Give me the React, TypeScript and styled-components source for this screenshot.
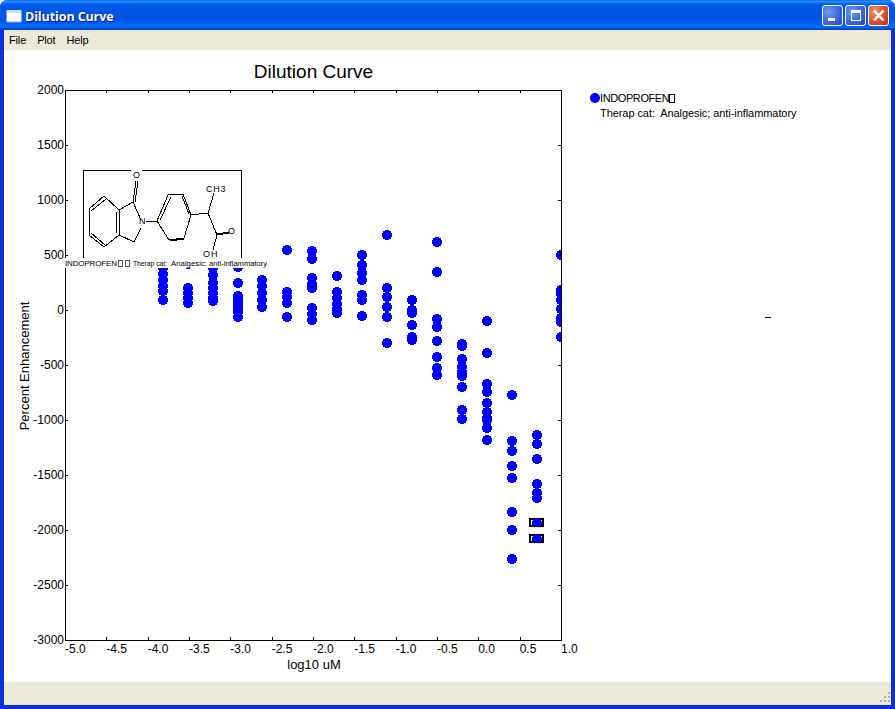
import React from "react";
import styled, { createGlobalStyle } from "styled-components";

const Global = createGlobalStyle`
  html, body { margin: 0; padding: 0; background: #fff; }
  #root { width: 895px; height: 709px; overflow: hidden; }
`;

const Frame = styled.div`
  width: 895px;
  height: 709px;
  box-sizing: border-box;
  display: flex;
  flex-direction: column;
  background: #0831d9;
  border-radius: 7px 7px 0 0;
  overflow: hidden;
  font-family: "Liberation Sans", Arial, sans-serif;
`;

const TitleBar = styled.div`
  height: 30px;
  flex: none;
  box-sizing: border-box;
  padding: 2px 6px 0;
  display: flex;
  align-items: center;
  background: linear-gradient(180deg, #0058ee 0%, #3593ff 4%, #288eff 6%, #127dff 8%, #036ffc 10%, #0262ee 14%, #0057e5 20%, #0054e3 56%, #0055eb 66%, #005bf5 76%, #026afe 86%, #0062ef 92%, #0052d6 94%, #0040ab 100%);
`;

const TitleIcon = styled.svg`
  width: 16px;
  height: 16px;
  flex: none;
  margin-right: 3px;
`;

const TitleText = styled.div`
  flex: 1;
  color: #fff;
  font: bold 12.5px "Open Sans", "DejaVu Sans", sans-serif;
  letter-spacing: -0.1px;
  padding-top: 1px;
  text-shadow: 1px 1px 1px #0f1089;
`;

const Buttons = styled.div`
  display: flex;
  gap: 2px;
  margin-top: -1px;
`;

const CaptionButton = styled.div<{ $close?: boolean }>`
  width: 21px;
  height: 21px;
  box-sizing: border-box;
  border: 1px solid #fff;
  border-radius: 3px;
  display: flex;
  align-items: center;
  justify-content: center;
  background: ${(p) =>
    p.$close
      ? "radial-gradient(circle at 30% 30%, #ee9a80 0%, #d9582f 50%, #b8300f 100%)"
      : "radial-gradient(circle at 30% 30%, #6f97f0 0%, #3c6ae2 55%, #1d45c8 100%)"};
`;

const CaptionGlyph = styled.svg`
  width: 15px;
  height: 15px;
  display: block;
`;

const Body = styled.div`
  flex: 1;
  min-height: 0;
  display: flex;
  flex-direction: column;
  margin: 0 4px 4px;
  background: #fff;
`;

const MenuBar = styled.div`
  height: 20px;
  flex: none;
  display: flex;
  align-items: center;
  gap: 11px;
  padding-left: 5px;
  padding-bottom: 1px;
  box-sizing: border-box;
  background: #ece9d8;
`;

const MenuItem = styled.span`
  font: 11px "Liberation Sans", Arial, sans-serif;
  letter-spacing: -0.15px;
  color: #000;
`;

const Client = styled.div`
  flex: 1;
  min-height: 0;
  display: flex;
  position: relative;
`;

const ChartSvg = styled.svg`
  width: 583px;
  height: 632px;
  flex: none;
  display: block;
`;

const Legend = styled.div`
  flex: 1;
  padding: 41px 0 0 13px;
  font: 11px/15px "Liberation Sans", Arial, sans-serif;
  color: #000;
`;

const LegendRow = styled.div<{ $tracking: number }>`
  position: relative;
  white-space: pre;
  letter-spacing: ${(p) => p.$tracking}px;
`;

const LegendDot = styled.span`
  position: absolute;
  left: -10px;
  top: 2px;
  width: 10px;
  height: 10px;
  border-radius: 50%;
  background: #0000ff;
`;

const MissingGlyph = styled.span`
  display: inline-block;
  width: 4px;
  height: 7px;
  border: 1px solid #000;
  vertical-align: -1px;
`;

const StrayMark = styled.span`
  position: absolute;
  left: 761px;
  top: 267px;
  width: 6px;
  height: 1px;
  background: #000;
`;

const StatusBar = styled.div`
  height: 23px;
  flex: none;
  position: relative;
  background: #ece9d8;
`;

const Grip = styled.svg`
  position: absolute;
  right: 0;
  bottom: 2px;
  width: 12px;
  height: 12px;
`;

const xTicks = Array.from({ length: 13 }, (_, i) => 65 + i * 41.33);
const yTicks = Array.from({ length: 11 }, (_, i) => 90 + i * 55);
const xLabels = ["-5.0","-4.5","-4.0","-3.5","-3.0","-2.5","-2.0","-1.5","-1.0","-0.5","0.0","0.5","1.0"];
const yLabels = ["2000","1500","1000","500","0","-500","-1000","-1500","-2000","-2500","-3000"];

const columns: [number, number[]][] = [
  [163, [268, 274, 280, 286, 291, 300]],
  [188, [264, 288, 293, 298, 303]],
  [213, [268, 275, 283, 288, 293, 298, 301]],
  [238, [267, 283, 296, 300, 304, 308, 312, 317]],
  [262, [280, 286, 293, 300, 307]],
  [287, [250, 292, 297, 303, 317]],
  [312, [251, 259, 278, 284, 288, 308, 314, 320]],
  [337, [276, 292, 298, 304, 309, 313]],
  [362, [255, 265, 273, 280, 295, 300, 316]],
  [387, [235, 288, 297, 307, 317, 343]],
  [412, [300, 310, 313, 325, 337, 340]],
  [437, [242, 272, 319, 327, 341, 357, 368, 375]],
  [462, [344, 346, 359, 367, 372, 376, 387, 410, 419]],
  [487, [321, 353, 384, 392, 403, 412, 418, 420, 428, 440]],
  [512, [395, 441, 451, 466, 478, 512, 530, 559]],
  [537, [435, 444, 459, 484, 493, 498, 523, 539]],
  [561, [255, 290, 294, 300, 309, 318, 322, 337]],
];

const bonds = [
  "M104 196L119 210L119 235L104 247L89 235L89 209Z",
  "M106 199L91 211M91 233L105 245M116 212L116 233",
  "M119 210L133 202L141 220M141 228L134 242L119 235",
  "M133 202L136 181M135 202L138 181",
  "M146 221L157 221L168 195L183 194L191 215L184 238L169 240L157 221",
  "M160 220L171 197M182 196L189 214M170 240L184 238M170 241L184 239",
  "M191 215L208 213L214 193M208 213L217 235L229 233M217 234L229 232M217 235L213 250",
];

export default function App() {
  return (
    <Frame>
      <Global />
      <TitleBar>
        <TitleIcon viewBox="0 0 16 16">
          <rect x="0.5" y="2" width="15" height="12" rx="1" fill="#fff" />
          <rect x="1" y="2" width="14" height="3" fill="#cfe0fb" />
          <path d="M1 14h14" stroke="#8fb0ee" />
        </TitleIcon>
        <TitleText>Dilution Curve</TitleText>
        <Buttons>
          <CaptionButton>
            <CaptionGlyph viewBox="0 0 15 15">
              <rect x="3" y="10" width="7" height="3" fill="#fff" />
            </CaptionGlyph>
          </CaptionButton>
          <CaptionButton>
            <CaptionGlyph viewBox="0 0 15 15">
              <path d="M3 2h10v11H3z M4 5v7h8V5z" fill="#fff" fillRule="evenodd" />
            </CaptionGlyph>
          </CaptionButton>
          <CaptionButton $close>
            <CaptionGlyph viewBox="0 0 15 15">
              <path d="M3 2.5L12.5 12.5M12.5 2.5L3 12.5" stroke="#fff" strokeWidth="2.4" />
            </CaptionGlyph>
          </CaptionButton>
        </Buttons>
      </TitleBar>
      <Body>
        <MenuBar>
          <MenuItem>File</MenuItem>
          <MenuItem>Plot</MenuItem>
          <MenuItem>Help</MenuItem>
        </MenuBar>
        <Client>
          <ChartSvg viewBox="4 50 583 632" fontFamily="'Liberation Sans', Arial, sans-serif">
            <defs>
              <clipPath id="plot">
                <rect x="65" y="90" width="496.5" height="550" />
              </clipPath>
            </defs>
            <text x="313.5" y="78" fontSize="19" textAnchor="middle">Dilution Curve</text>
            <g clipPath="url(#plot)" shapeRendering="crispEdges">
              <rect x="530" y="519" width="13" height="7" fill="#fff" stroke="#000" strokeWidth="2" />
              <rect x="530" y="535" width="13" height="7" fill="#fff" stroke="#000" strokeWidth="2" />
              {columns.flatMap(([x, ys]) =>
                ys.map((y) => <circle key={`${x}-${y}`} cx={x} cy={y} r="5.1" fill="#0000ff" />)
              )}
              <rect x="535" y="517" width="4" height="1" fill="#ffff00" />
              <rect x="533" y="527" width="8" height="1" fill="#ffff00" />
              <rect x="535" y="533" width="4" height="1" fill="#ffff00" />
              <rect x="533" y="543" width="8" height="1" fill="#ffff00" />
            </g>
            <g stroke="#000" shapeRendering="crispEdges">
              <rect x="65.5" y="90.5" width="496" height="550" fill="none" />
              {xTicks.map((x) => (
                <g key={x}>
                  <path d={`M${Math.round(x)}.5 91V93`} />
                  <path d={`M${Math.round(x)}.5 640V637`} />
                </g>
              ))}
              {yTicks.map((y) => (
                <g key={y}>
                  <path d={`M66 ${y}.5H68`} />
                  <path d={`M561 ${y}.5H558`} />
                </g>
              ))}
            </g>
            {yLabels.map((t, i) => (
              <text key={t} x="64" y={94 + i * 55} fontSize="12" textAnchor="end">{t}</text>
            ))}
            {xLabels.map((t, i) => (
              <text key={t} x={65 + i * 41.33} y="653" fontSize="12">{t}</text>
            ))}
            <text x="314" y="669" fontSize="13" textAnchor="middle">log10 uM</text>
            <text transform="translate(29 366) rotate(-90)" fontSize="13" textAnchor="middle">Percent Enhancement</text>

            <rect x="83.5" y="170.5" width="158" height="90" fill="#fff" stroke="#000" shapeRendering="crispEdges" />
            <rect x="131" y="168" width="11" height="6" fill="#fff" />
            <g stroke="#000" strokeWidth="1" fill="none" shapeRendering="crispEdges">
              {bonds.map((d) => <path key={d} d={d} />)}
            </g>
            <g fontSize="9" fill="#000">
              <text x="133" y="178">O</text>
              <text x="139" y="224">N</text>
              <text x="206" y="192" letterSpacing="0.8">CH3</text>
              <text x="228" y="234">O</text>
              <text x="203" y="257" letterSpacing="1">OH</text>
            </g>
            <rect x="65" y="258" width="202" height="10" fill="#fff" />
            <g fontSize="8" fill="#000">
              <text x="65" y="266" textLength="52" lengthAdjust="spacing">INDOPROFEN</text>
              <rect x="118.5" y="260.5" width="4" height="6" fill="none" stroke="#555" shapeRendering="crispEdges" />
              <rect x="125.5" y="260.5" width="4" height="6" fill="none" stroke="#555" shapeRendering="crispEdges" />
              <text x="133" y="266" textLength="34" lengthAdjust="spacingAndGlyphs">Therap cat:</text>
              <text x="171" y="266" textLength="36" lengthAdjust="spacingAndGlyphs">Analgesic;</text>
              <text x="209" y="266" textLength="58" lengthAdjust="spacingAndGlyphs">anti-inflammatory</text>
            </g>
          </ChartSvg>
          <Legend>
            <LegendRow $tracking={-0.4}>
              <LegendDot />
              INDOPROFEN<MissingGlyph />
            </LegendRow>
            <LegendRow $tracking={-0.07}>{"Therap cat:  Analgesic; anti-inflammatory"}</LegendRow>
          </Legend>
          <StrayMark />
        </Client>
        <StatusBar>
          <Grip viewBox="0 0 12 12">
            <g fill="#b5b1a0">
              <rect x="9" y="1" width="2" height="2" />
              <rect x="5" y="5" width="2" height="2" />
              <rect x="9" y="5" width="2" height="2" />
              <rect x="1" y="9" width="2" height="2" />
              <rect x="5" y="9" width="2" height="2" />
              <rect x="9" y="9" width="2" height="2" />
            </g>
          </Grip>
        </StatusBar>
      </Body>
    </Frame>
  );
}
